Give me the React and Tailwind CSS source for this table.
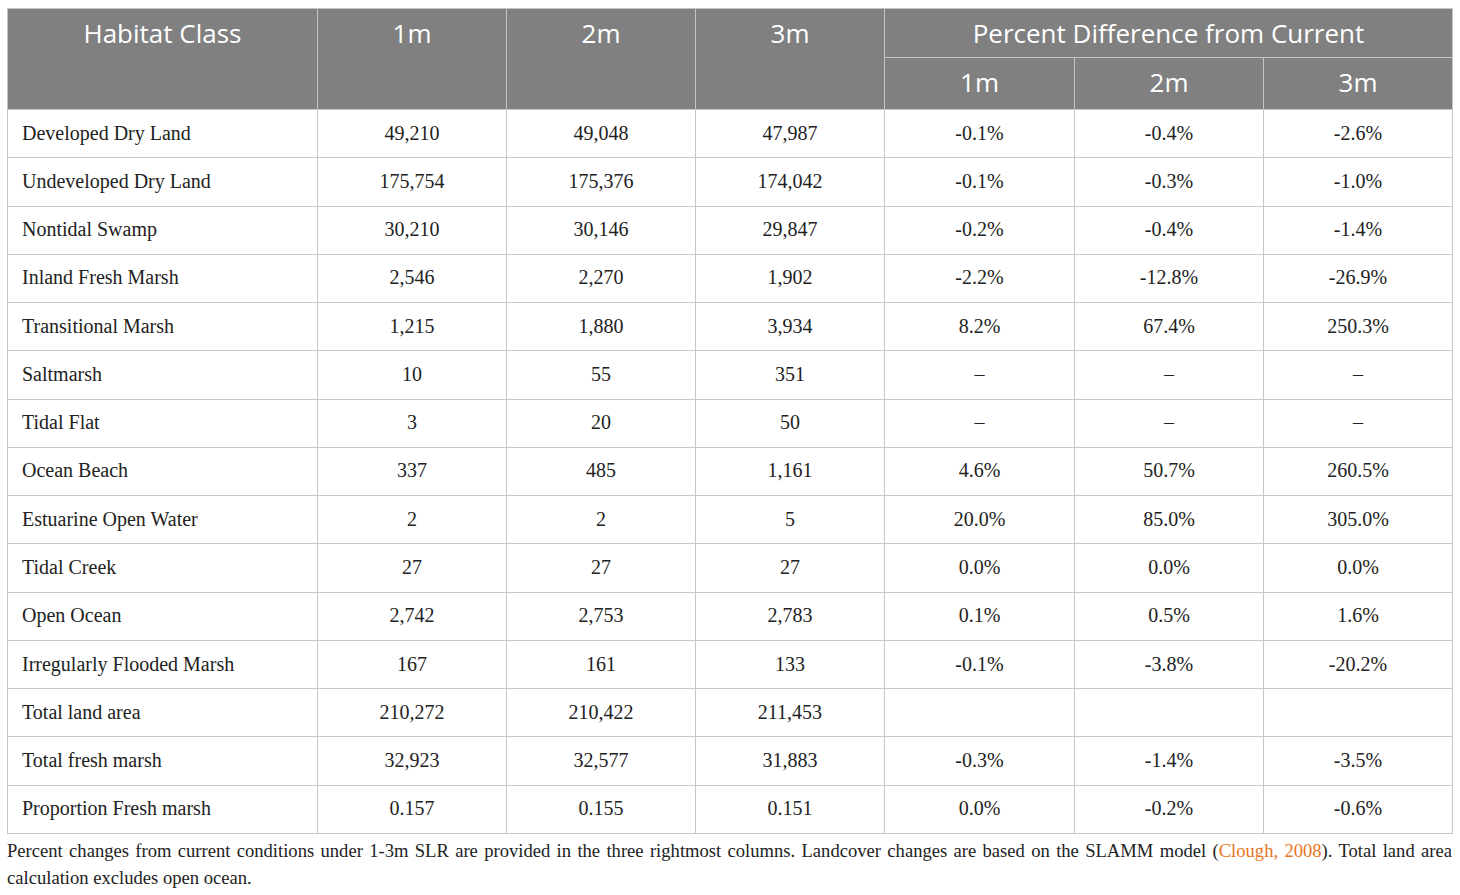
import React from 'react';

const rows = [
  ['Developed Dry Land', '49,210', '49,048', '47,987', '-0.1%', '-0.4%', '-2.6%'],
  ['Undeveloped Dry Land', '175,754', '175,376', '174,042', '-0.1%', '-0.3%', '-1.0%'],
  ['Nontidal Swamp', '30,210', '30,146', '29,847', '-0.2%', '-0.4%', '-1.4%'],
  ['Inland Fresh Marsh', '2,546', '2,270', '1,902', '-2.2%', '-12.8%', '-26.9%'],
  ['Transitional Marsh', '1,215', '1,880', '3,934', '8.2%', '67.4%', '250.3%'],
  ['Saltmarsh', '10', '55', '351', '–', '–', '–'],
  ['Tidal Flat', '3', '20', '50', '–', '–', '–'],
  ['Ocean Beach', '337', '485', '1,161', '4.6%', '50.7%', '260.5%'],
  ['Estuarine Open Water', '2', '2', '5', '20.0%', '85.0%', '305.0%'],
  ['Tidal Creek', '27', '27', '27', '0.0%', '0.0%', '0.0%'],
  ['Open Ocean', '2,742', '2,753', '2,783', '0.1%', '0.5%', '1.6%'],
  ['Irregularly Flooded Marsh', '167', '161', '133', '-0.1%', '-3.8%', '-20.2%'],
  ['Total land area', '210,272', '210,422', '211,453', '', '', ''],
  ['Total fresh marsh', '32,923', '32,577', '31,883', '-0.3%', '-1.4%', '-3.5%'],
  ['Proportion Fresh marsh', '0.157', '0.155', '0.151', '0.0%', '-0.2%', '-0.6%'],
];

const serif = { fontFamily: '"Liberation Serif", "Times New Roman", serif' };

export default function App() {
  return (
    <div className="bg-white w-[1460px] h-[895px] px-[7px] pt-[8px]">
      <table className="w-[1445px] border-collapse table-fixed">
        <colgroup>
          <col className="w-[310px]" />
          <col className="w-[189px]" />
          <col className="w-[189px]" />
          <col className="w-[189px]" />
          <col className="w-[190px]" />
          <col className="w-[189px]" />
          <col className="w-[189px]" />
        </colgroup>
        <thead className="bg-[#808080] text-white text-[26px] font-['Open_Sans',sans-serif]">
          <tr className="h-[49px]">
            <th rowSpan={2} className="border border-[#c4c4c4] font-normal align-top pt-[6px] leading-[36px]">Habitat Class</th>
            <th rowSpan={2} className="border border-[#c4c4c4] font-normal align-top pt-[6px] leading-[36px]">1m</th>
            <th rowSpan={2} className="border border-[#c4c4c4] font-normal align-top pt-[6px] leading-[36px]">2m</th>
            <th rowSpan={2} className="border border-[#c4c4c4] font-normal align-top pt-[6px] leading-[36px]">3m</th>
            <th colSpan={3} className="border border-[#c4c4c4] font-normal leading-[36px]">Percent Difference from Current</th>
          </tr>
          <tr className="h-[52px]">
            <th className="border border-[#c4c4c4] font-normal leading-[36px] pb-[4px]">1m</th>
            <th className="border border-[#c4c4c4] font-normal leading-[36px] pb-[4px]">2m</th>
            <th className="border border-[#c4c4c4] font-normal leading-[36px] pb-[4px]">3m</th>
          </tr>
        </thead>
        <tbody className="text-[20px] text-[#222]" style={serif}>
          {rows.map((r) => (
            <tr key={r[0]} className="h-[48.27px]">
              {r.map((c, i) => (
                <td
                  key={i}
                  className={`border border-[#c8c8c8] pb-[2px] ${i === 0 ? 'text-left pl-[14px]' : 'text-center'}`}
                >
                  {c}
                </td>
              ))}
            </tr>
          ))}
        </tbody>
      </table>
      <p className="text-[18.6px] leading-[27px] text-[#222] text-justify mt-[3px] w-[1445px]" style={serif}>
        Percent changes from current conditions under 1-3m SLR are provided in the three rightmost columns. Landcover changes are based on the SLAMM model (<span className="text-[#e8761f]">Clough, 2008</span>). Total land area calculation excludes open ocean.
      </p>
    </div>
  );
}
